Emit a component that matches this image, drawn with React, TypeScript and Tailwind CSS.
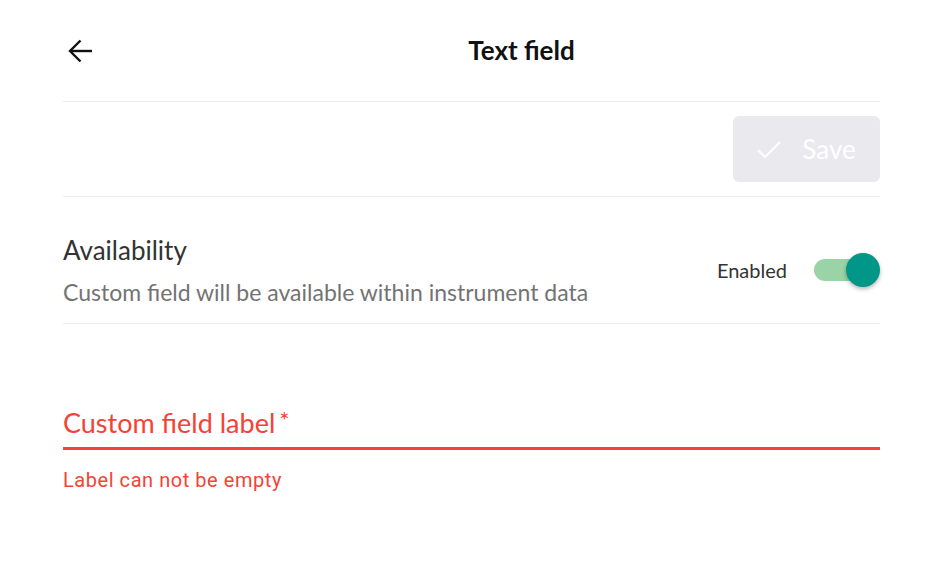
export default function App() {
  return (
    <div className="w-[926px] h-[572px] bg-white overflow-hidden font-['Lato',sans-serif]">
      <div className="ml-[63px] w-[817px]">
        {/* header */}
        <div className="h-[102px] flex items-center border-b border-[#ececec]">
          <div className="w-[100px] flex items-center">
            <svg width="25" height="24" viewBox="0 0 25 24" className="ml-[5px]" fill="none" stroke="#111" strokeWidth="2.4">
              <path d="M24 12H2" />
              <path d="M12.5 1.5L2 12l10.5 10.5" />
            </svg>
          </div>
          <h1 className="flex-1 text-center text-[26px] font-bold text-[#111] leading-[30px] -mt-[2px]">Text field</h1>
        </div>

        {/* save row */}
        <div className="py-[14px] flex justify-end border-b border-[#ececec]">
          <button className="w-[147px] h-[66px] rounded-[6px] bg-[#e9e9ee] flex items-center justify-center gap-[21px] text-white">
            <svg width="24" height="24" viewBox="0 0 24 24" fill="none" stroke="white" strokeWidth="2.2">
              <path d="M1 13l7 7L23 5" />
            </svg>
            <span className="text-[26px] leading-[30px]">Save</span>
          </button>
        </div>

        {/* availability */}
        <div className="pt-[37px] pb-[17px] flex items-center justify-between border-b border-[#ececec]">
          <div>
            <div className="text-[26px] leading-[32px] text-[#333]">Availability</div>
            <div className="mt-[12px] text-[23px] leading-[28px] text-[#737373]">Custom field will be available within instrument data</div>
          </div>
          <div className="flex items-center gap-[27px]">
            <span className="text-[20px] text-[#333]">Enabled</span>
            <div className="relative w-[66px] h-[34px]">
              <div className="absolute left-0 top-[6px] w-[54px] h-[22px] rounded-full bg-[#9ad3a6]" />
              <div className="absolute right-0 top-0 w-[34px] h-[34px] rounded-full bg-[#009688] shadow-[0_2px_4px_rgba(0,0,0,0.3)]" />
            </div>
          </div>
        </div>

        {/* field */}
        <div className="mt-[83px] pb-[8px] border-b-[3px] border-[#f44336] flex items-start">
          <span className="text-[27px] leading-[32px] text-[#f44336]">Custom field label</span>
          <span className="ml-[4px] mt-[2px] text-[24px] leading-[22px] text-[#f44336]">*</span>
        </div>
        <div className="mt-[17px] text-[20px] leading-[26px] text-[#f44336] font-['Roboto',sans-serif] tracking-[0.55px]">
          Label can not be empty
        </div>
      </div>
    </div>
  );
}
